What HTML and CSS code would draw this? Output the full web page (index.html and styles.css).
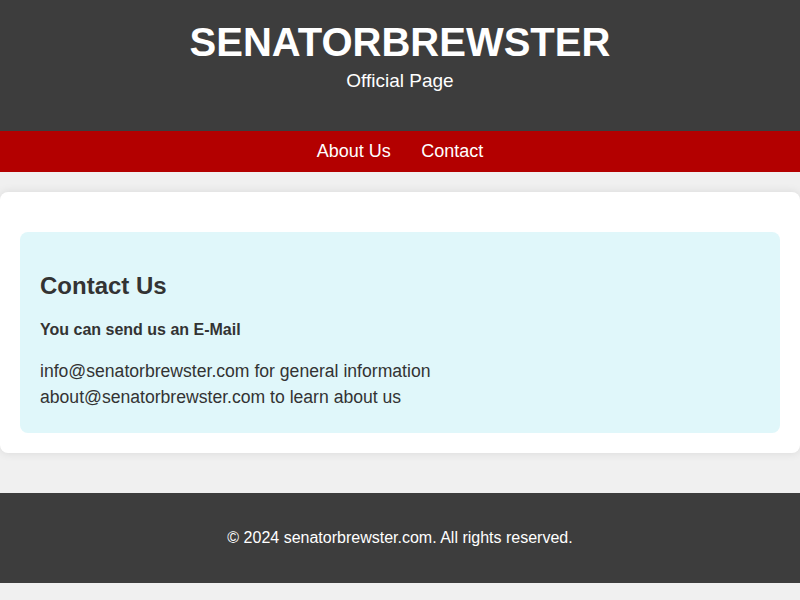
FILE: index.html
```html
<!DOCTYPE html>
<html lang="en">
<head>
    <meta charset="UTF-8">
    <meta name="viewport" content="width=device-width, initial-scale=1.0">
    <title>SenatorBrewster - Contact</title>
    <link rel="stylesheet" href="styles.css">
</head>
<body>
    <header id="top">
        <h1>SENATORBREWSTER</h1>
        <p>Official Page</p>
    </header>
    <nav id="menu">
        <a href="#about">About Us</a>
        <a href="#contact">Contact</a>
    </nav>
    <main>
        <div class="card">
            <section id="contact" class="contactbox">
                <h2>Contact Us</h2>
                <h4>You can send us an E-Mail</h4>
                <p>
                    info@senatorbrewster.com for general information
                    <br>
                    about@senatorbrewster.com to learn about us
                </p>
            </section>
        </div>
    </main>
    <footer>
        &copy; 2024 senatorbrewster.com. All rights reserved.
    </footer>
</body>
</html>
```

FILE: styles.css
```css
body {
    margin: 0;
    background-color: #f0f0f0;
    color: #333;
    font-family: "Liberation Sans", Arial, sans-serif;
}
#top {
    background-color: #3d3d3d;
    color: #fff;
    text-align: center;
    padding: 20px;
}
#top h1 {
    margin: 0;
    font-size: 40px;
}
#top p {
    margin: 5px 0 19px;
    font-size: 19px;
}
#menu {
    background-color: #b30000;
    text-align: center;
    padding: 10px;
}
#menu a {
    color: #fff;
    text-decoration: none;
    font-size: 18px;
    margin: 0 13px;
}
.card {
    background-color: #fff;
    border-radius: 8px;
    box-shadow: 0 0 10px rgba(0, 0, 0, 0.1);
    margin: 20px 0 40px;
    padding: 40px 20px 20px;
}
.contactbox {
    background-color: #e0f7fa;
    border-radius: 8px;
    padding: 20px;
}
.contactbox h2 {
    font-size: 24px;
    margin: 20px 0 21px;
}
.contactbox h4 {
    font-size: 16px;
    margin: 0 0 19px;
}
.contactbox p {
    font-size: 17.6px;
    line-height: 26px;
    margin: 0 0 3px;
}
footer {
    background-color: #3d3d3d;
    color: #fff;
    text-align: center;
    font-size: 16px;
    padding: 36px 20px;
}
```
